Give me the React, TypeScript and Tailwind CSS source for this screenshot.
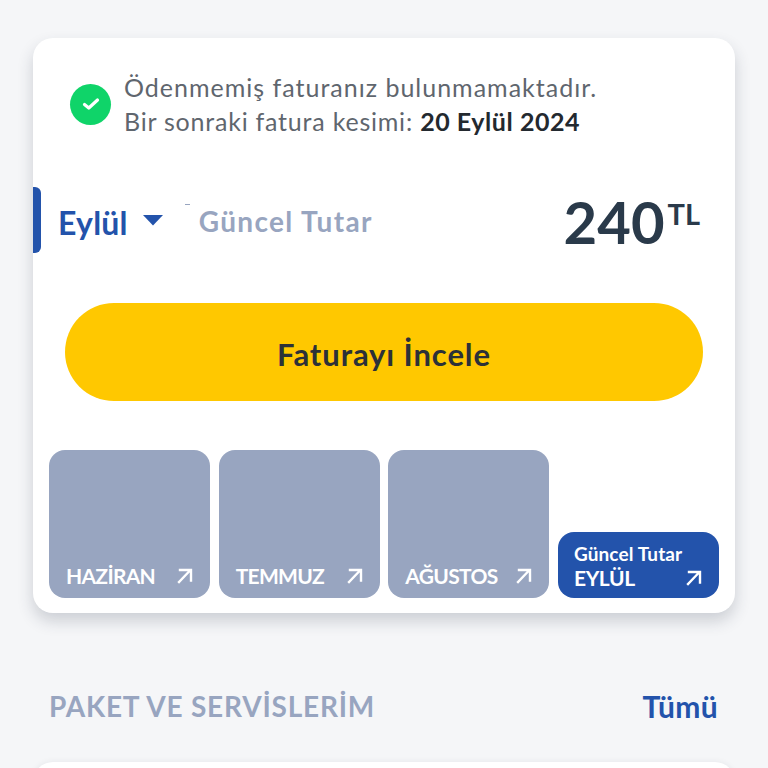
import React from "react";

function Arrow() {
  return (
    <svg width="18" height="18" viewBox="0 0 18 18" fill="none" stroke="currentColor" strokeWidth="2.4" strokeLinecap="square" className="shrink-0">
      <path d="M3 15 L14 3.5 M4 3 H15 V13.5" />
    </svg>
  );
}

function Month({ name }: { name: string }) {
  return (
    <div className="h-[148px] w-[161px] rounded-[16px] bg-[#98a5c0] flex items-end justify-between pl-[17px] pr-[16px] pb-[10px] text-white">
      <span className="text-[21px] leading-[24px] font-bold tracking-[-0.7px]">{name}</span>
      <span className="mb-[3px]"><Arrow /></span>
    </div>
  );
}

export default function App() {
  return (
    <div className="h-[768px] w-[768px] overflow-hidden bg-[#f5f6f8] pt-[38px] font-['Lato','Noto_Sans',sans-serif]">
      <div className="mx-[33px] h-[575px] w-[702px] rounded-[20px] bg-white shadow-[0_8px_16px_rgba(40,50,70,0.2)] flex flex-col">
        <div className="flex items-center pl-[37px] pt-[32px]">
          <div className="h-[41px] w-[41px] rounded-full bg-[#0fd469] flex items-center justify-center">
            <svg width="20" height="16" viewBox="0 0 20 16" fill="none" stroke="white" strokeWidth="3.2" strokeLinecap="round" strokeLinejoin="round">
              <path d="M3.5 8.5 L7.8 12 L16.5 4" />
            </svg>
          </div>
          <div className="ml-[13px] text-[25px] leading-[34px] text-[#5f666e]">
            <div className="tracking-[1px]">Ödenmemiş faturanız bulunmamaktadır.</div>
            <div className="tracking-[0.78px]">Bir sonraki fatura kesimi: <span className="font-bold text-[#23292f] tracking-[0.55px]">20 Eylül 2024</span></div>
          </div>
        </div>

        <div className="mt-[49px] flex items-center h-[66px]">
          <div className="h-[66px] w-[8px] rounded-r-[6px] bg-[#2353ab]" />
          <span className="ml-[17px] text-[32px] font-bold text-[#2353ab] tracking-[0.2px] mt-[5px]">Eylül</span>
          <svg width="20" height="11" viewBox="0 0 20 11" className="ml-[15px] mt-[1px]"><path d="M0 0 H20 L10 10.5 Z" fill="#2353ab" /></svg>
          <div className="relative ml-[36px] mt-[2px]">
            <div className="absolute left-[-14px] top-[4px] h-[1px] w-[5px] bg-[#98a5c0]" />
            <span className="text-[28px] font-bold text-[#98a5c0] tracking-[1.35px]">Güncel Tutar</span>
          </div>
          <div className="ml-auto mr-[35px] flex items-start text-[#2a3a4a]">
            <span className="text-[58px] leading-[66px] font-bold mt-[4px]">240</span>
            <span className="text-[29px] leading-[32px] font-bold ml-[3px] mt-[13px]">TL</span>
          </div>
        </div>

        <div className="ml-[32px] mt-[50px] h-[98px] w-[638px] rounded-full bg-[#ffc800] flex items-center justify-center text-[31px] font-bold text-[#2c3138] tracking-[0.9px] pt-[5px]">
          Faturayı İncele
        </div>

        <div className="mx-[16px] mt-[49px] flex items-end justify-between">
          <Month name="HAZİRAN" />
          <Month name="TEMMUZ" />
          <Month name="AĞUSTOS" />
          <div className="h-[66px] w-[161px] rounded-[16px] bg-[#2353ab] text-white pl-[16px] pr-[16px] pt-[11px] flex flex-col">
            <span className="text-[19px] leading-[22px] font-bold tracking-[0.1px]">Güncel Tutar</span>
            <div className="flex items-center justify-between">
              <span className="text-[21px] leading-[26px] font-bold tracking-[-0.4px]">EYLÜL</span>
              <Arrow />
            </div>
          </div>
        </div>
      </div>

      <div className="ml-[49px] w-[669px] mt-[76px] flex items-center justify-between h-[34px]">
        <span className="text-[28px] font-bold tracking-[0.8px] text-[#98a5c0]">PAKET VE SERVİSLERİM</span>
        <span className="text-[30px] font-bold text-[#2353ab] tracking-[0.3px]">Tümü</span>
      </div>

      <div className="mx-[33px] mt-[39px] h-[200px] rounded-[20px] bg-white shadow-[0_0_6px_rgba(40,50,70,0.08)]" />
    </div>
  );
}
